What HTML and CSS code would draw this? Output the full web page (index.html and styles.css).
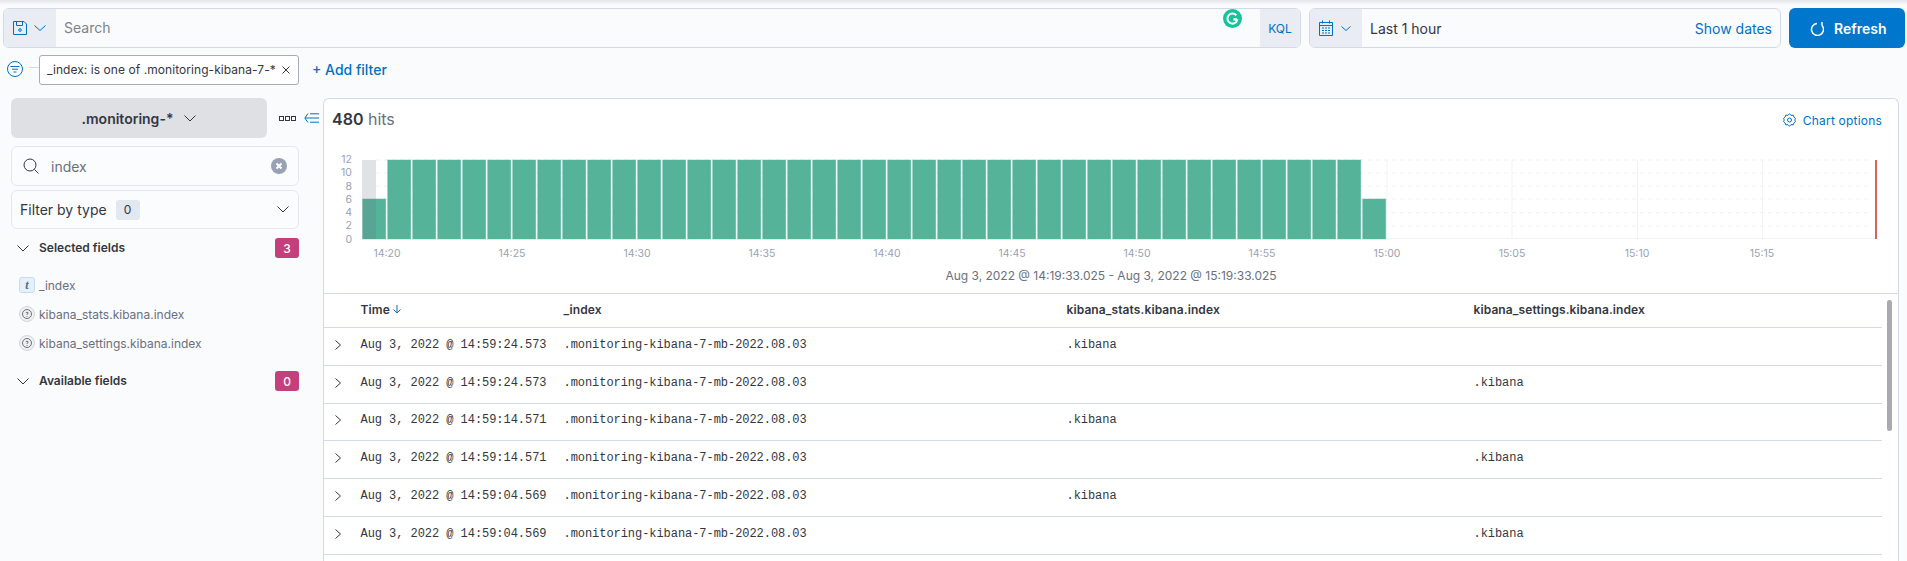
FILE: index.html
```html
<!DOCTYPE html>
<html lang="en">
<head>
<meta charset="utf-8">
<title>Discover</title>
<link rel="stylesheet" href="styles.css">
</head>
<body>
<div class="app">
  <header class="topbar">
    <div class="query">
      <button class="prepend">
        <svg width="14" height="14" viewBox="0 0 14 14" class="blue-stroke"><path d="M.5.5h10.500l2.500 2.500v10.500H.5z M3.500.5v4h6v-4"/><circle cx="7" cy="9" r="1.300"/></svg>
        <svg width="12" height="6" viewBox="0 0 12 6" class="blue-stroke"><path d="M.5.500 6 5.500 11.500.500"/></svg>
      </button>
      <span class="query-text">Search</span>
      <span class="grammarly"><svg width="19" height="19" viewBox="0 0 19 19"><circle cx="9.500" cy="9.500" r="9.500" fill="#15c39a"/><path d="M13.300 6.400A5 5 0 1 0 14.200 11.200L10.500 10.200H14" fill="none" stroke="#fff" stroke-width="2"/></svg></span>
      <span class="kql">KQL</span>
    </div>
    <div class="datepicker">
      <button class="date-prepend">
        <svg width="14" height="16" viewBox="0 0 14 16" class="blue-stroke"><path d="M.5 2.500h13v13H.5z M.5 5.500h13 M3.500.5v3 M10.500.5v3 M3 8h2 M6 8h2 M9 8h2 M3 10.500h2 M6 10.500h2 M9 10.500h2 M3 13h2 M6 13h2 M9 13h2"/></svg>
        <svg width="10" height="5" viewBox="0 0 10 5" class="blue-stroke"><path d="M.5.500 5 4.500 9.500.500"/></svg>
      </button>
      <span class="date-text">Last 1 hour</span>
      <span class="show-dates">Show dates</span>
    </div>
    <button class="refresh">
      <svg class="refresh-icon" width="14" height="15" viewBox="0 0 14 15" fill="none" stroke="#fff" stroke-width="1.500"><path d="M12 4.500A6 6 0 1 1 7 2.500M12 1v3.500"/></svg>
      Refresh
    </button>
  </header>

  <div class="filterbar">
    <svg class="filter-icon" width="16" height="16" viewBox="0 0 16 16" fill="none" stroke="#0071c2"><circle cx="8" cy="8" r="7.500"/><path d="M3.500 5.500h9 M5 8.200h6 M6.500 11h3"/></svg>
    <span class="filter-dash"></span>
    <span class="pill"><span>_index: is one of .monitoring-kibana-7-*</span>
      <svg width="8" height="8" viewBox="0 0 8 8" stroke="#343741" fill="none"><path d="M.5.500l7 7M7.500.500l-7 7"/></svg>
    </span>
    <span class="add-filter">+ Add filter</span>
  </div>

  <div class="content">
    <aside class="sidebar">
      <div class="pattern-row">
        <button class="pattern">.monitoring-*
          <svg width="12" height="7" viewBox="0 0 12 7" fill="none" stroke="#343741"><path d="M.5.500 6 6 11.500.500"/></svg>
        </button>
        <span class="dots"><i></i><i></i><i></i></span>
        <svg width="15" height="10" viewBox="0 0 15 10" fill="none" stroke="#0071c2"><path d="M4 .5.800 5 4 9.500M1 5h14M6 .8h9M6 9.200h9"/></svg>
      </div>
      <div class="box search-box">
        <svg width="16" height="16" viewBox="0 0 16 16" fill="none" stroke="#343741"><circle cx="7" cy="7" r="6"/><path d="m11.500 11.500 4 4"/></svg>
        <span class="search-value">index</span>
        <svg class="clear" width="16" height="16" viewBox="0 0 16 16"><circle cx="8" cy="8" r="8" fill="#98a2b3"/><path d="m5.500 5.500 5 5m0-5-5 5" stroke="#fff" stroke-width="2"/></svg>
      </div>
      <div class="box type-box">
        <span>Filter by type</span>
        <span class="zero">0</span>
        <svg class="type-chevron" width="12" height="7" viewBox="0 0 12 7" fill="none" stroke="#343741"><path d="M.5.500 6 6 11.500.500"/></svg>
      </div>
      <div class="section">
        <svg width="12" height="7" viewBox="0 0 12 7" fill="none" stroke="#343741"><path d="M.5.500 6 6 11.500.500"/></svg>
        <span class="section-title">Selected fields</span>
        <span class="count">3</span>
      </div>
      <ul class="fields">
        <li><span class="tok-t">t</span>_index</li>
        <li><svg width="16" height="16" viewBox="0 0 16 16" fill="none"><circle cx="8" cy="8" r="7.500" fill="#f0f0f1" stroke="#d5d6d9"/><circle cx="8" cy="8" r="4.500" stroke="#69707d"/><path d="M6.800 6.800q1.200-1.300 2.400 0 0 1-1.200 1.500V9M8 10v.8" stroke="#69707d"/></svg>kibana_stats.kibana.index</li>
        <li><svg width="16" height="16" viewBox="0 0 16 16" fill="none"><circle cx="8" cy="8" r="7.500" fill="#f0f0f1" stroke="#d5d6d9"/><circle cx="8" cy="8" r="4.500" stroke="#69707d"/><path d="M6.800 6.800q1.200-1.300 2.400 0 0 1-1.200 1.500V9M8 10v.8" stroke="#69707d"/></svg>kibana_settings.kibana.index</li>
      </ul>
      <div class="section available">
        <svg width="12" height="7" viewBox="0 0 12 7" fill="none" stroke="#343741"><path d="M.5.500 6 6 11.500.500"/></svg>
        <span class="section-title">Available fields</span>
        <span class="count">0</span>
      </div>
    </aside>

    <main class="panel">
      <div class="hits-row">
        <span class="hits"><b>480</b> hits</span>
        <span class="chart-options">
          <svg width="13" height="14" viewBox="0 0 13 14" fill="none" stroke="#0071c2"><path d="M6.500.7 8 2.400l2.200-.3.800 2.100 1.500 1.300-.8 1.500.8 1.500-1.500 1.300-.8 2.100L8 11.600l-1.500 1.700L5 11.600l-2.200.3-.8-2.100L.5 8.500l.8-1.500L.5 5.500 2 4.200l.8-2.100 2.200.3z"/><circle cx="6.500" cy="7" r="2"/></svg>
          Chart options
        </span>
      </div>
      <svg class="chart" width="1574" height="152" viewBox="324 141 1574 152">
        <g class="grid-h">
          <path d="M376 160H1872M376 173H1872M376 186H1872M376 199H1872M376 212.500H1872M376 226H1872"/>
        </g>
        <g class="grid-v">
          <path d="M1387 160V239M1512 160V239M1637.500 160V239M1762.500 160V239M1387 238.500H1875"/>
        </g>
        <g class="bars">
          <rect x="362.7" y="199" width="23" height="40"/>
          <rect x="387.7" y="160" width="23" height="79"/><rect x="412.7" y="160" width="23" height="79"/><rect x="437.7" y="160" width="23" height="79"/><rect x="462.7" y="160" width="23" height="79"/><rect x="487.7" y="160" width="23" height="79"/>
          <rect x="512.7" y="160" width="23" height="79"/><rect x="537.7" y="160" width="23" height="79"/><rect x="562.7" y="160" width="23" height="79"/><rect x="587.7" y="160" width="23" height="79"/><rect x="612.7" y="160" width="23" height="79"/>
          <rect x="637.7" y="160" width="23" height="79"/><rect x="662.7" y="160" width="23" height="79"/><rect x="687.7" y="160" width="23" height="79"/><rect x="712.7" y="160" width="23" height="79"/><rect x="737.7" y="160" width="23" height="79"/>
          <rect x="762.7" y="160" width="23" height="79"/><rect x="787.7" y="160" width="23" height="79"/><rect x="812.7" y="160" width="23" height="79"/><rect x="837.7" y="160" width="23" height="79"/><rect x="862.7" y="160" width="23" height="79"/>
          <rect x="887.7" y="160" width="23" height="79"/><rect x="912.7" y="160" width="23" height="79"/><rect x="937.7" y="160" width="23" height="79"/><rect x="962.7" y="160" width="23" height="79"/><rect x="987.7" y="160" width="23" height="79"/>
          <rect x="1012.7" y="160" width="23" height="79"/><rect x="1037.7" y="160" width="23" height="79"/><rect x="1062.7" y="160" width="23" height="79"/><rect x="1087.7" y="160" width="23" height="79"/><rect x="1112.7" y="160" width="23" height="79"/>
          <rect x="1137.7" y="160" width="23" height="79"/><rect x="1162.7" y="160" width="23" height="79"/><rect x="1187.7" y="160" width="23" height="79"/><rect x="1212.7" y="160" width="23" height="79"/><rect x="1237.7" y="160" width="23" height="79"/>
          <rect x="1262.7" y="160" width="23" height="79"/><rect x="1287.7" y="160" width="23" height="79"/><rect x="1312.7" y="160" width="23" height="79"/><rect x="1337.7" y="160" width="23" height="79"/>
          <rect x="1362.7" y="199" width="23" height="40"/>
        </g>
        <rect class="out-of-range" x="362" y="160" width="14" height="79"/>
        <rect class="now-line" x="1875" y="160" width="2" height="79"/>
        <g class="y-labels">
          <text x="352" y="163">12</text><text x="352" y="176">10</text><text x="352" y="190">8</text><text x="352" y="203">6</text><text x="352" y="216">4</text><text x="352" y="229">2</text><text x="352" y="243">0</text>
        </g>
        <g class="x-labels">
          <text x="387" y="257">14:20</text><text x="512" y="257">14:25</text><text x="637" y="257">14:30</text><text x="762" y="257">14:35</text><text x="887" y="257">14:40</text><text x="1012" y="257">14:45</text><text x="1137" y="257">14:50</text><text x="1262" y="257">14:55</text><text x="1387" y="257">15:00</text><text x="1512" y="257">15:05</text><text x="1637" y="257">15:10</text><text x="1762" y="257">15:15</text>
        </g>
        <text class="caption" x="1111" y="280">Aug 3, 2022 @ 14:19:33.025 - Aug 3, 2022 @ 15:19:33.025</text>
      </svg>
      <div class="table">
        <div class="row head">
          <span></span>
          <span>Time <svg width="8" height="9" viewBox="0 0 8 9" fill="none" stroke="#0071c2"><path d="M4 0v8M.5 4.500 4 8l3.500-3.500"/></svg></span>
          <span>_index</span>
          <span>kibana_stats.kibana.index</span>
          <span>kibana_settings.kibana.index</span>
        </div>
        <div class="row"><svg width="6" height="10" viewBox="0 0 6 10" fill="none" stroke="#343741"><path d="m.5.500 5 4.500-5 4.500"/></svg><span>Aug 3, 2022 @ 14:59:24.573</span><span class="idx">.monitoring-kibana-7-mb-2022.08.03</span><span>.kibana</span><span></span></div>
        <div class="row"><svg width="6" height="10" viewBox="0 0 6 10" fill="none" stroke="#343741"><path d="m.5.500 5 4.500-5 4.500"/></svg><span>Aug 3, 2022 @ 14:59:24.573</span><span class="idx">.monitoring-kibana-7-mb-2022.08.03</span><span></span><span>.kibana</span></div>
        <div class="row"><svg width="6" height="10" viewBox="0 0 6 10" fill="none" stroke="#343741"><path d="m.5.500 5 4.500-5 4.500"/></svg><span>Aug 3, 2022 @ 14:59:14.571</span><span class="idx">.monitoring-kibana-7-mb-2022.08.03</span><span>.kibana</span><span></span></div>
        <div class="row"><svg width="6" height="10" viewBox="0 0 6 10" fill="none" stroke="#343741"><path d="m.5.500 5 4.500-5 4.500"/></svg><span>Aug 3, 2022 @ 14:59:14.571</span><span class="idx">.monitoring-kibana-7-mb-2022.08.03</span><span></span><span>.kibana</span></div>
        <div class="row"><svg width="6" height="10" viewBox="0 0 6 10" fill="none" stroke="#343741"><path d="m.5.500 5 4.500-5 4.500"/></svg><span>Aug 3, 2022 @ 14:59:04.569</span><span class="idx">.monitoring-kibana-7-mb-2022.08.03</span><span>.kibana</span><span></span></div>
        <div class="row"><svg width="6" height="10" viewBox="0 0 6 10" fill="none" stroke="#343741"><path d="m.5.500 5 4.500-5 4.500"/></svg><span>Aug 3, 2022 @ 14:59:04.569</span><span class="idx">.monitoring-kibana-7-mb-2022.08.03</span><span></span><span>.kibana</span></div>
        <span class="scrollbar"></span>
      </div>
    </main>
  </div>
</div>
</body>
</html>
```

FILE: styles.css
```css
* { box-sizing: border-box; }
html, body { margin: 0; height: 561px; overflow: hidden; }
body {
  background: #fafbfd;
  color: #343741;
  font-family: Inter, "Liberation Sans", sans-serif;
  font-size: 14px;
}
button { font: inherit; border: 0; padding: 0; color: inherit; }
.blue-stroke { fill: none; stroke: #0071c2; }

.app {
  height: 561px;
  display: flex;
  flex-direction: column;
  background: linear-gradient(#e4e5e8, #fafbfd 5px);
  background-repeat: no-repeat;
  background-color: #fafbfd;
}

.topbar {
  display: flex;
  padding: 8px 2px 0 3px;
  height: 48px;
  flex: none;
}
.query {
  position: relative;
  width: 1298px;
  height: 40px;
  display: flex;
  align-items: center;
  border: 1px solid #d3dae6;
  border-radius: 6px;
}
.prepend {
  width: 52px;
  height: 38px;
  background: #e9edf3;
  border-radius: 5px 0 0 5px;
  display: flex;
  align-items: center;
  gap: 7px;
  padding-left: 9px;
}
.query-text { color: #7d828c; margin-left: 8px; padding-bottom: 1px; }
.grammarly { position: absolute; left: 1219px; top: 0; height: 19px; }
.kql {
  margin-left: auto;
  width: 40px;
  height: 38px;
  background: #e9edf3;
  border-radius: 0 5px 5px 0;
  color: #0071c2;
  font-size: 12px;
  display: flex;
  align-items: center;
  justify-content: center;
}
.datepicker {
  margin-left: 8px;
  width: 472px;
  height: 40px;
  display: flex;
  align-items: center;
  border: 1px solid #d3dae6;
  border-radius: 6px;
}
.date-prepend {
  width: 52px;
  height: 38px;
  background: #e9edf3;
  border-radius: 5px 0 0 5px;
  display: flex;
  align-items: center;
  gap: 8px;
  padding-left: 9px;
}
.date-text { margin-left: 8px; }
.show-dates { margin-left: auto; margin-right: 8px; color: #0071c2; }
.refresh {
  margin-left: 8px;
  width: 116px;
  height: 40px;
  background: #0077cc;
  border-radius: 6px;
  color: #fff;
  font-weight: 600;
  display: flex;
  align-items: center;
  gap: 10px;
  padding-left: 21px;
}
.refresh-icon { flex: none; }

.filterbar {
  flex: none;
  height: 30px;
  margin-top: 7px;
  padding-left: 7px;
  display: flex;
  align-items: center;
}
.filter-icon { flex: none; margin-bottom: 3px; }
.filter-dash { width: 10px; height: 1px; background: #d3dae6; margin: 0 0 6px 6px; }
.pill {
  width: 260px;
  height: 30px;
  background: #fff;
  border: 1px solid #a5adba;
  border-radius: 3px;
  font-size: 12px;
  display: flex;
  align-items: center;
  justify-content: space-between;
  padding: 0 8px 0 7px;
}
.pill span { letter-spacing: .06px; padding-bottom: 2px; }
.add-filter { margin-left: 13px; padding-bottom: 2px; color: #0071c2; font-weight: 500; font-size: 14px; }

.content {
  flex: 1;
  min-height: 0;
  margin-top: 13px;
  display: flex;
}
.sidebar { width: 323px; flex: none; padding-left: 11px; }
.pattern-row { display: flex; align-items: center; height: 40px; }
.pattern {
  width: 256px;
  height: 40px;
  background: #dfe0e4;
  border-radius: 6px;
  font-weight: 600;
  display: flex;
  align-items: center;
  justify-content: center;
  gap: 11px;
}
.dots { display: flex; gap: 1px; margin: 0 8px 0 12px; }
.dots i { width: 5px; height: 5px; border: 1px solid #343741; }
.box {
  width: 288px;
  background: #fbfcfe;
  border: 1px solid #e3e7f0;
  border-radius: 6px;
  display: flex;
  align-items: center;
}
.search-box { height: 40px; margin-top: 8px; padding-left: 11px; }
.search-value { margin-left: 12px; color: #69707d; }
.clear { margin-left: auto; margin-right: 11px; }
.type-box { height: 39px; margin-top: 4px; padding-left: 8px; }
.zero {
  margin-left: 9px;
  width: 24px;
  height: 20px;
  background: #e3e8f0;
  border-radius: 3px;
  font-size: 12px;
  display: flex;
  align-items: center;
  justify-content: center;
}
.type-chevron { margin-left: auto; margin-right: 9px; }
.section {
  width: 288px;
  height: 20px;
  margin-top: 9px;
  padding-left: 6px;
  display: flex;
  align-items: center;
  font-size: 12px;
}
.section-title { margin-left: 10px; font-weight: 600; padding-bottom: 2px; }
.count {
  margin-left: auto;
  width: 24px;
  height: 20px;
  background: #c4407c;
  border-radius: 3px;
  color: #fff;
  font-weight: 500;
  display: flex;
  align-items: center;
  justify-content: center;
}
.fields { list-style: none; margin: 13px 0 0; padding: 0 0 0 8px; font-size: 12px; color: #69707d; }
.fields li { height: 29px; display: flex; align-items: center; gap: 4px; padding-bottom: 1px; }
.tok-t {
  width: 16px;
  height: 16px;
  background: #e6f0f8;
  border: 1px solid #c6dcec;
  border-radius: 3px;
  color: #4a7194;
  font: italic bold 12px "Liberation Serif", serif;
  display: flex;
  align-items: center;
  justify-content: center;
}
.available { margin-top: 13px; }

.panel {
  width: 1576px;
  flex: none;
  background: #fff;
  border: 1px solid #d3dae6;
  border-bottom: 0;
  border-radius: 6px 6px 0 0;
}
.hits-row {
  height: 42px;
  display: flex;
  align-items: center;
  justify-content: space-between;
  padding: 0 16px 0 8px;
}
.hits { font-size: 16px; color: #69707d; padding-bottom: 2px; }
.hits b { color: #343741; font-weight: 600; }
.chart-options { color: #0071c2; font-size: 12px; letter-spacing: .2px; display: flex; align-items: center; gap: 7px; }
.chart { display: block; font-family: Inter, "Liberation Sans", sans-serif; }
.grid-h path { stroke: #f0f1f3; stroke-dasharray: 4 4; fill: none; }
.grid-v path { stroke: #f2f3f5; fill: none; }
.bars rect { fill: #54b399; stroke: #54b399; stroke-opacity: .45; }
.out-of-range { fill: #69707d; fill-opacity: .2; }
.now-line { fill: #d4625e; }
.y-labels text { font-size: 10.500px; fill: #98a2b3; text-anchor: end; }
.x-labels text { font-size: 10.500px; fill: #98a2b3; text-anchor: middle; }
.caption { font-size: 12px; fill: #69707d; text-anchor: middle; }

.table { position: relative; border-top: 1px solid #d3dae6; padding-right: 16px; }
.row {
  display: grid;
  grid-template-columns: 36.500px 203px 503px 407px 1fr;
  align-items: center;
  height: 37.800px;
  padding-bottom: 3px;
  border-bottom: 1px solid #d3dae6;
  font: 12px "Liberation Mono", monospace;
  letter-spacing: -.05px;
}
.row > svg { margin-left: 11px; }
.row.head {
  height: 34px;
  padding-bottom: 2px;
  font: 600 12px Inter, "Liberation Sans", sans-serif;
  letter-spacing: .1px;
}
.scrollbar {
  position: absolute;
  right: 6px;
  top: 6px;
  width: 5px;
  height: 131px;
  background: #a9abb0;
  border-radius: 3px;
}
```
